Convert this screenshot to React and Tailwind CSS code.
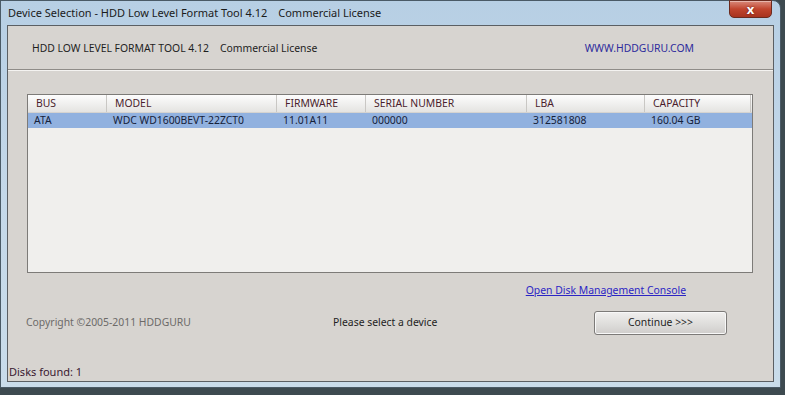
import React from "react";

const columns = [
  { label: "BUS", w: "w-[79px]" },
  { label: "MODEL", w: "w-[170px]" },
  { label: "FIRMWARE", w: "w-[89px]" },
  { label: "SERIAL NUMBER", w: "w-[161px]" },
  { label: "LBA", w: "w-[118px]" },
  { label: "CAPACITY", w: "w-[106px]" },
];

const row = ["ATA", "WDC WD1600BEVT-22ZCT0", "11.01A11", "000000", "312581808", "160.04 GB"];

const App = () => {
  return (
    <div
      className="relative w-[785px] h-[395px] overflow-hidden bg-[#3d4a50]"
      style={{ fontFamily: "'Noto Sans', 'DejaVu Sans', sans-serif" }}
    >
      {/* Window frame */}
      <div className="flex flex-col w-[781px] h-[388px] rounded-tr-[8px] border border-[#4a5a66] bg-gradient-to-b from-[#b7cfe4] via-[#c4d8e9] to-[#c9dcea]">
        {/* Title bar */}
        <div className="relative flex items-center h-[24px] pl-[7px] text-[11px] text-[#1b1b1b]">
          <span>Device Selection - HDD Low Level Format Tool 4.12</span>
          <span className="ml-[11px]">Commercial License</span>
          <div className="absolute top-[-1px] right-[8px] flex items-center justify-center w-[43px] h-[18px] rounded-b-[5px] border border-[#6b2a1e] bg-gradient-to-b from-[#d9897a] via-[#c1452e] to-[#a8331f] shadow-[inset_0_1px_0_rgba(255,255,255,0.4)]">
            <span className="text-[13px] font-bold leading-none text-white [text-shadow:0_0_2px_#5a1a10]">x</span>
          </div>
        </div>

        {/* Client area */}
        <div className="flex flex-col flex-1 mx-[6px] mb-[5px] border border-[#5b5f63] bg-[#d7d4d0] text-[10.4px]">
          {/* Header */}
          <div className="flex items-center justify-between h-[44px] pt-[2px] pl-[24px] pr-[79px] border-b border-[#8f8c88] shadow-[0_1px_0_#f4f3f1]">
            <div className="text-[#1e1e1e]">
              <span>HDD LOW LEVEL FORMAT TOOL 4.12</span>
              <span className="ml-[11px]">Commercial License</span>
            </div>
            <span className="text-[#2e2b9c]">WWW.HDDGURU.COM</span>
          </div>

          {/* Device list */}
          <div className="mt-[24px] ml-[19px] w-[726px] h-[179px] border border-[#7d7b78] bg-[#f0efed]">
            <div className="flex h-[18px] bg-gradient-to-b from-[#fdfdfd] to-[#e4e3e1] border-b border-[#d5d3d0] text-[#4a1d2c]">
              {columns.map((c) => (
                <div key={c.label} className={`${c.w} flex items-center pl-[8px] pt-[1px] border-r border-[#c9c7c4]`}>
                  {c.label}
                </div>
              ))}
            </div>
            <div className="flex h-[15px] bg-[#91b1df] text-[#15213a]">
              {row.map((v, i) => (
                <div key={i} className={`${columns[i].w} flex items-center pl-[6px]`}>
                  {v}
                </div>
              ))}
            </div>
          </div>

          {/* Link */}
          <div className="flex justify-end pr-[87px] mt-[10px]">
            <span className="underline text-[#2c25c4]">Open Disk Management Console</span>
          </div>

          {/* Footer row */}
          <div className="flex items-center mt-[12px] pl-[18px]">
            <span className="w-[307px] text-[#6c6a68]">Copyright ©2005-2011 HDDGURU</span>
            <span className="w-[261px] text-[#1e1e1e]">Please select a device</span>
            <button className="w-[133px] h-[24px] rounded-[3px] border border-[#7c7a78] bg-gradient-to-b from-[#f0efee] via-[#e0dfdd] to-[#cfcdcb] text-[#1e1e1e] shadow-[inset_0_0_0_1px_#f8f8f8]">
              Continue &gt;&gt;&gt;
            </button>
          </div>

          {/* Status bar */}
          <div className="mt-auto pl-[1px] pb-[1px] text-[11px] text-[#3a1830]">Disks found: 1</div>
        </div>
      </div>
    </div>
  );
};

export default App;
